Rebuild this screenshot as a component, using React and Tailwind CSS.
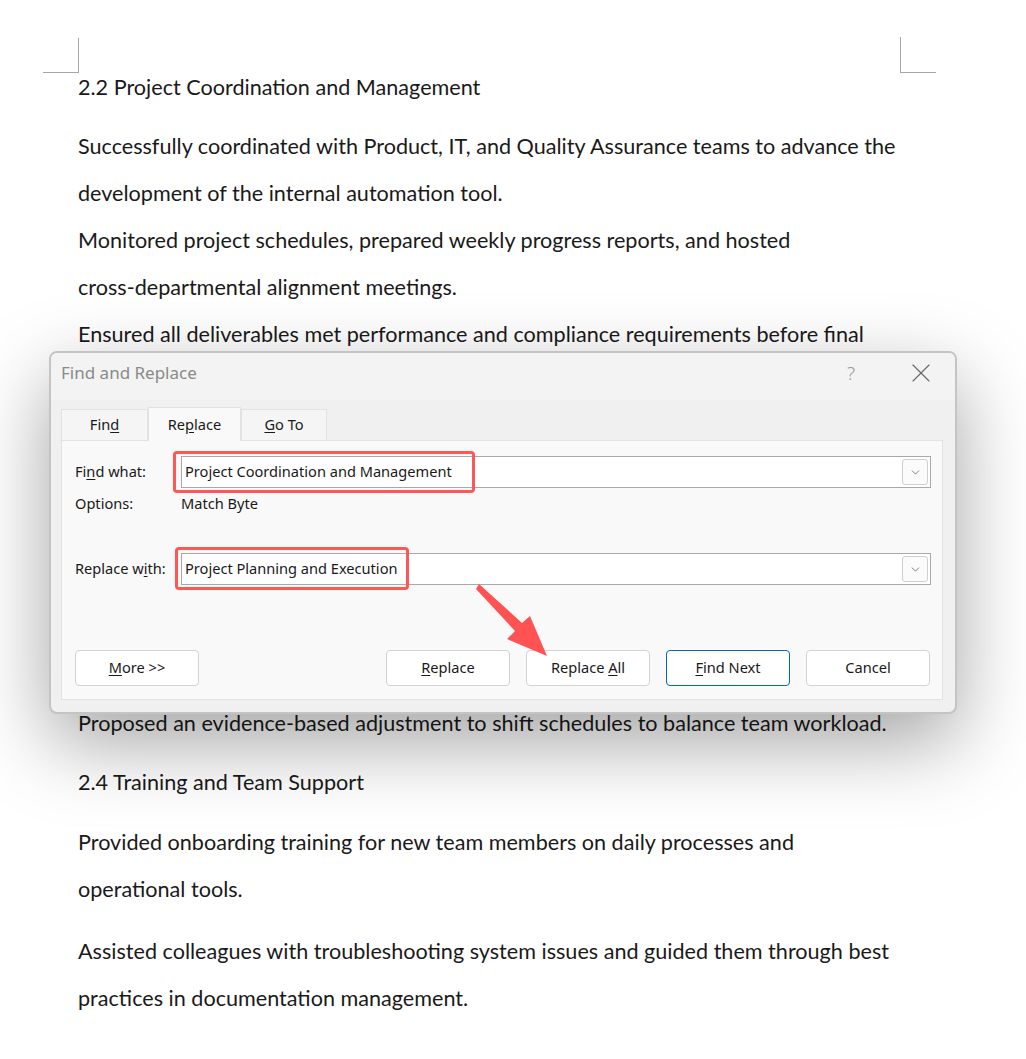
import { X, ChevronDown } from 'lucide-react'

const docFont = { fontFamily: 'Lato, "Noto Sans", sans-serif' }
const uiFont = { fontFamily: '"Noto Sans", "Open Sans", sans-serif' }

function Line({ children }) {
  return <div className="h-[47px] leading-[47px] whitespace-nowrap">{children}</div>
}

function Key({ children }) {
  return <span className="underline underline-offset-2">{children}</span>
}

function Combo({ value, mark }) {
  return (
    <div className="relative flex-1 h-[32px] bg-white border border-[#a9a9a9] flex items-center">
      <span className="pl-[3px] text-[14.6px] text-[#1a1a1a]">{value}</span>
      <div className="ml-auto mr-[2px] w-[26px] h-[26px] border border-[#cfcfcf] rounded-[3px] bg-[#fbfbfb] flex items-center justify-center">
        <ChevronDown size={13} strokeWidth={1.4} className="text-[#555]" />
      </div>
      {mark}
    </div>
  )
}

function Btn({ children, primary }) {
  return (
    <div
      className={
        'w-[124px] h-[36px] rounded-[4px] bg-white flex items-center justify-center text-[14.6px] text-[#1a1a1a] ' +
        (primary ? 'border border-[#0067c0]' : 'border border-[#d2d2d2]')
      }
    >
      <span className="whitespace-pre">{children}</span>
    </div>
  )
}

export default function App() {
  return (
    <div className="relative w-[1026px] h-[1059px] bg-white overflow-hidden" style={docFont}>
      {/* page corner marks */}
      <div className="absolute left-[43px] top-[38px] w-[36px] h-[35px] border-r border-b border-[#a6a6a6]" />
      <div className="absolute left-[900px] top-[37px] w-[36px] h-[36px] border-l border-b border-[#a6a6a6]" />

      <div className="pl-[78px] pt-[64px] text-[21.6px] text-[#1a1a1a]">
        <Line>2.2 Project Coordination and Management</Line>
        <div className="mt-[12px]">
          <Line>Successfully coordinated with Product, IT, and Quality Assurance teams to advance the</Line>
          <Line>development of the internal automation tool.</Line>
          <Line>Monitored project schedules, prepared weekly progress reports, and hosted</Line>
          <Line>cross-departmental alignment meetings.</Line>
          <Line>Ensured all deliverables met performance and compliance requirements before final</Line>
          <Line>release to production.</Line>
        </div>
        <div className="mt-[12px]">
          <Line>2.3 Operational Analysis</Line>
        </div>
        <div className="mt-[12px]">
          <Line>Reviewed weekly operating data to identify staffing gaps during peak periods.</Line>
          <Line>Compiled findings into summary reports for department leadership.</Line>
          <Line>Tracked recurring issues and documented root causes for follow-up.</Line>
          <Line>Consulted with supervisors to confirm the scope of each adjustment.</Line>
        </div>
        <div className="mt-[36px]">
          <Line>Proposed an evidence-based adjustment to shift schedules to balance team workload.</Line>
        </div>
        <div className="mt-[12px]">
          <Line>2.4 Training and Team Support</Line>
        </div>
        <div className="mt-[13px]">
          <Line>Provided onboarding training for new team members on daily processes and</Line>
          <Line>operational tools.</Line>
        </div>
        <div className="mt-[15px]">
          <Line>Assisted colleagues with troubleshooting system issues and guided them through best</Line>
          <Line>practices in documentation management.</Line>
        </div>
      </div>

      {/* Find and Replace dialog */}
      <div
        className="absolute left-[49px] top-[351px] w-[908px] h-[363px] rounded-[8px] border-2 border-[#c4c4c4] bg-[#f0f0f0] shadow-[0_28px_80px_rgba(0,0,0,0.36)] flex flex-col overflow-hidden"
        style={uiFont}
      >
        <div className="h-[47px] shrink-0 bg-[#f3f3f3] flex items-start pt-[7px] pl-[10px]">
          <span className="text-[17px] text-[#8a8a8a]">Find and Replace</span>
          <span className="ml-auto w-[20px] text-center text-[19px] leading-[26px] text-[#9a9a9a] font-light">?</span>
          <div className="w-[94px] flex justify-end pr-[18px] -mt-[3px]">
            <X size={32} strokeWidth={0.85} className="text-[#666]" />
          </div>
        </div>
        <div className="flex-1 flex flex-col pl-[10px] pr-[12px] pb-[12px] pt-[7px]">
          <div className="flex items-end h-[33px] text-[14.6px] text-[#1a1a1a]">
            <div className="w-[87px] h-[31px] bg-[#f5f5f5] border border-b-0 border-[#e2e2e2] flex items-center justify-center">
              Fin<Key>d</Key>
            </div>
            <div className="relative z-10 w-[93px] h-[34px] -mb-[1px] bg-[#f9f9f9] border border-b-0 border-[#e2e2e2] flex items-center justify-center">
              Re<Key>p</Key>lace
            </div>
            <div className="w-[86px] h-[31px] bg-[#f5f5f5] border border-b-0 border-[#e2e2e2] flex items-center justify-center">
              <Key>G</Key>o To
            </div>
          </div>
          <div className="flex-1 bg-[#f9f9f9] border border-[#e2e2e2] pl-[13px] pr-[11px] pt-[15px] text-[14.6px] text-[#1a1a1a]">
            <div className="flex items-center">
              <div className="w-[106px]">
                Fi<Key>n</Key>d what:
              </div>
              <Combo
                value="Project Coordination and Management"
                mark={
                  <div className="absolute -left-[9px] -top-[6px] w-[302px] h-[42px] rounded-[4px] border-[3px] border-[#ff5656]" />
                }
              />
            </div>
            <div className="flex items-center h-[20px] mt-[6px]">
              <div className="w-[106px]">Options:</div>
              <div>Match Byte</div>
            </div>
            <div className="flex items-center mt-[39px]">
              <div className="w-[106px] whitespace-nowrap">
                Replace w<Key>i</Key>th:
              </div>
              <Combo
                value="Project Planning and Execution"
                mark={
                  <div className="absolute -left-[7px] -top-[7px] w-[234px] h-[43px] rounded-[4px] border-[3px] border-[#ff5656]" />
                }
              />
            </div>
            <div className="flex items-center mt-[65px]">
              <Btn>
                <Key>M</Key>ore &gt;&gt;
              </Btn>
              <div className="ml-auto flex gap-[16px] pr-[1px]">
                <Btn>
                  <Key>R</Key>eplace
                </Btn>
                <Btn>
                  Replace <Key>A</Key>ll
                </Btn>
                <Btn primary>
                  <Key>F</Key>ind Next
                </Btn>
                <Btn>Cancel</Btn>
              </div>
            </div>
          </div>
        </div>
      </div>

      {/* annotation arrow */}
      <svg className="absolute left-0 top-0 pointer-events-none" width="1026" height="1059">
        <polygon
          points="476,589 479,584 522,623 530,616 547,656 507,639 515,631"
          fill="#ff5252"
          strokeLinejoin="round"
        />
      </svg>
    </div>
  )
}
